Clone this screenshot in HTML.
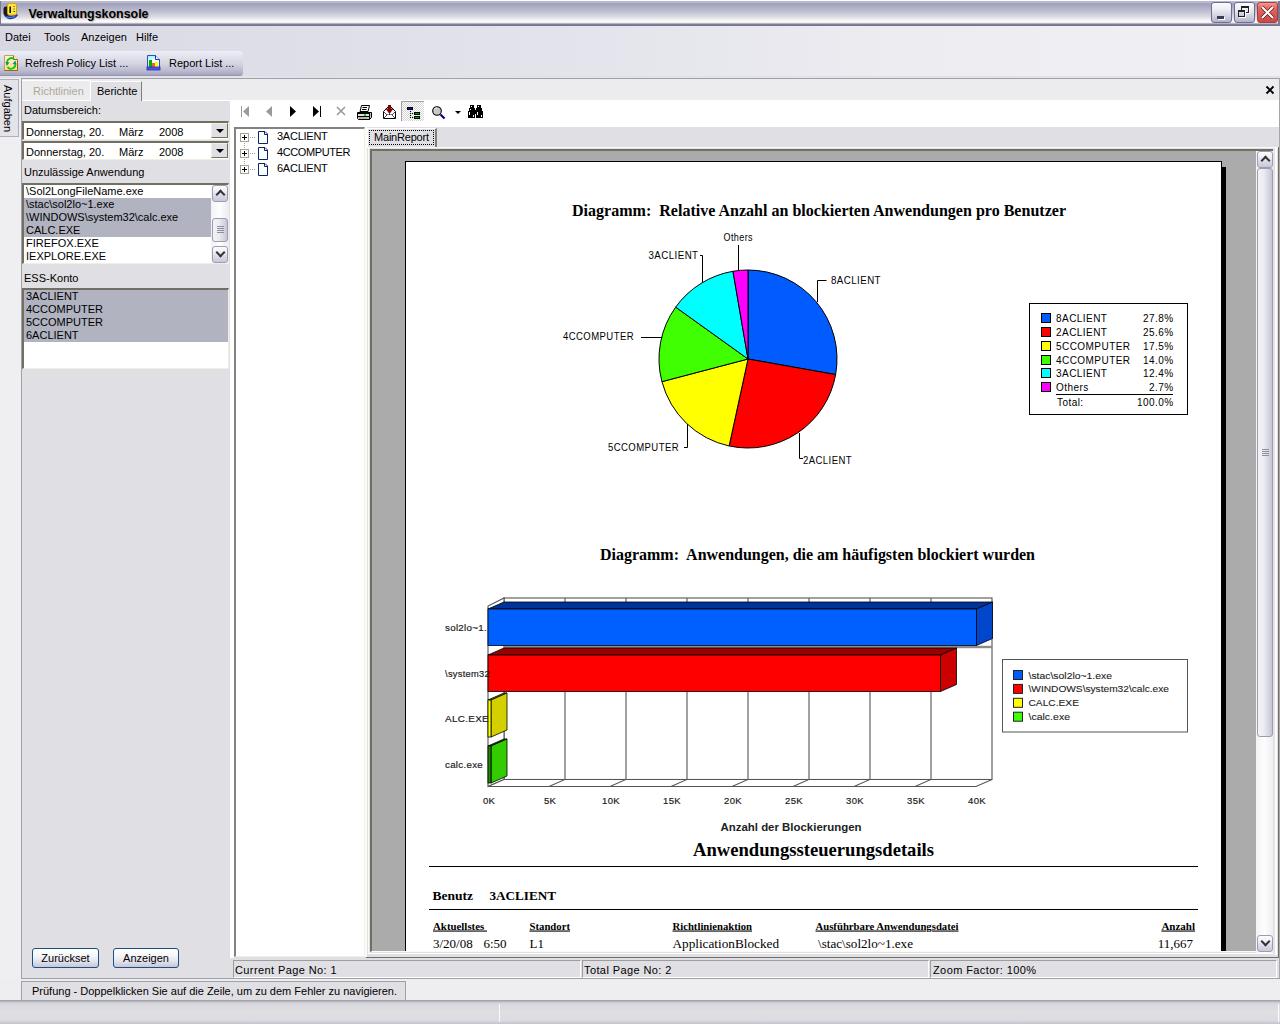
<!DOCTYPE html>
<html><head><meta charset="utf-8">
<style>
*{margin:0;padding:0;box-sizing:border-box}
html,body{width:1280px;height:1024px;overflow:hidden;background:#e0dfe3;font-family:"Liberation Sans",sans-serif;font-size:11px;color:#000}
.a{position:absolute}
.t{position:absolute;white-space:nowrap;line-height:13px}
.serif{font-family:"Liberation Serif",serif}

.dp{left:22px;width:207px;height:19px;background:#fff;border-top:2px solid #716f64;border-left:2px solid #716f64;border-bottom:1px solid #f1efe2;border-right:1px solid #f1efe2}
.sbtrack{background:linear-gradient(90deg,#f3f3f6,#fdfdfd 50%,#eeeef2)}
.sbbtn,.sbthumb{border:1px solid #9c9cb4;border-radius:3px}.sbbtn{background:linear-gradient(#fdfdfe 0,#f0f0f6 30%,#d4d4e2 75%,#c8c8da)}.sbthumb{background:linear-gradient(90deg,#f2f2f6,#ececf2 40%,#d0d0de 85%,#c4c4d4)}
.btn{border:1px solid #1d4f87;border-radius:3px;background:linear-gradient(#fff 0,#f6f6fa 35%,#e2e2ec 70%,#c6c6d6 100%);text-align:center;line-height:18px}
.chev{position:absolute;left:4px;width:7px;height:7px;border-left:2px solid #333;border-top:2px solid #333}
.chev.up{top:5px;transform:rotate(45deg)}
.chev.dn{top:2px;transform:rotate(225deg)}
.grip{position:absolute;left:4px;top:50%;margin-top:-4px;width:7px;height:7px;background:repeating-linear-gradient(#8e8ea0 0 1px,transparent 1px 2px)}

.ddb{width:17px;height:15px;background:#e0dfe3;border-right:1px solid #716f64;border-bottom:1px solid #716f64;border-top:1px solid #f1efe2;border-left:1px solid #f1efe2}
.tri{position:absolute;left:4px;top:5px;width:0;height:0;border-left:4px solid transparent;border-right:4px solid transparent;border-top:4px solid #000}

.sp{top:960px;height:18px;border-top:1px solid #9d9da1;border-left:1px solid #9d9da1;border-bottom:1px solid #fff;border-right:1px solid #fff}

.tbb{width:21px;height:21px;border:1px solid #6e6e92;border-radius:3px;background:linear-gradient(#fcfcfe 0,#ececf4 35%,#c8c8da 80%,#b0b0c8)}
</style></head><body>
<!-- title bar -->
<div class="a" style="left:0;top:0;width:1280px;height:26px;background:linear-gradient(#fdfdfe 0,#fdfdfe 1px,#b8b8cc 1px,#b8b8cc 3px,#a2a2be 3px,#a4a4bf 5px,#b4b6c8 9px,#c6c8d6 13px,#dcdce4 17px,#f2f2f5 20px,#fefefe 22px,#e2ded8 23px,#8a8aa2 24px,#747490 25px,#747490 26px)"></div>
<div class="a" style="left:0;top:1px;width:1px;height:24px;background:#7a7a94"></div>
<div class="a" style="left:1278px;top:1px;width:2px;height:24px;background:#7a7a94"></div>
<svg class="a" style="left:2px;top:2px" width="18" height="19" viewBox="0 0 18 19">
 <path d="M2 13.5 Q5 18 10 17 Q14 16.5 16 13 L15 12 Q9 15 3 11.5Z" fill="#1a3c9c"/>
 <path d="M4 15 Q8 16.5 13 14.5" fill="none" stroke="#7aa0e8" stroke-width="0.8"/>
 <path d="M1.5 6 Q2 4.5 4 4.5 L6 4.5 V14 Q3 14 1.5 12Z" fill="#1a1a1a"/>
 <rect x="5.5" y="1.5" width="9" height="11.5" rx="1.8" fill="#ffe83a" stroke="#d8a000" stroke-width="1"/>
 <path d="M8.2 4.5 V11" stroke="#111" stroke-width="1.6"/>
 <path d="M11.5 4.5 H12.5 M11.5 7 H12.5 M11.5 9.5 H13" stroke="#333" stroke-width="1.2"/>
</svg>
<svg class="a" style="left:0;top:0" width="200" height="26"><text x="28.5" y="18" font-family="Liberation Sans, sans-serif" font-weight="bold" font-size="12.5" textLength="120" lengthAdjust="spacingAndGlyphs" fill="#000" style="text-shadow:1px 1px 1px rgba(0,0,0,.25)">Verwaltungskonsole</text></svg>
<div class="a tbb" style="left:1211px;top:2px"><div class="a" style="left:5px;top:13px;width:7px;height:3px;background:#3a3a5e;box-shadow:1px 1px 0 #fff"></div></div>
<div class="a tbb" style="left:1234px;top:2px">
 <div class="a" style="left:6px;top:3px;width:8px;height:7px;border:1px solid #222;border-top-width:2px;box-shadow:1px 1px 0 #fff"></div>
 <div class="a" style="left:3px;top:7px;width:7px;height:7px;border:1px solid #222;border-top-width:2px;background:linear-gradient(#e0e0ea,#c4c4d6);box-shadow:1px 1px 0 #fff"></div>
</div>
<div class="a tbb" style="left:1257px;top:2px;border-color:#b23a3a;background:linear-gradient(#f0a090 0,#e06a64 25%,#d45a5a 60%,#c84848)">
 <svg class="a" style="left:-1px;top:-1px" width="21" height="21" viewBox="0 0 21 21"><path d="M5 5 L16 16 M16 5 L5 16" stroke="#5a1010" stroke-width="3.2"/><path d="M5 5 L16 16 M16 5 L5 16" stroke="#fff" stroke-width="2"/></svg>
</div>
<!-- menu bar -->
<div class="a" style="left:0;top:26px;width:1280px;height:52px;background:linear-gradient(90deg,#d8d8e2 0,#dcdce6 12%,#e4e4ec 47%,#ececf1 70%,#efeff3 85%,#f0f0f4)"></div>
<div class="t" style="left:5px;top:31px">Datei</div>
<div class="t" style="left:44px;top:31px">Tools</div>
<div class="t" style="left:81px;top:31px">Anzeigen</div>
<div class="t" style="left:136px;top:31px">Hilfe</div>
<!-- toolbar -->
<div class="a" style="left:0;top:51px;width:243px;height:25px;border-radius:0 3px 3px 0;background:linear-gradient(#eeeef8 0,#e4e4ee 20%,#d4d4e2 50%,#bcbcd0 78%,#a6a6c0 95%,#8888a2 100%)"></div>
<div class="a" style="left:0;top:76px;width:1280px;height:2px;background:#e2e2ea"></div>
<div class="a" style="left:0;top:78px;width:1280px;height:1px;background:#a0a0a8"></div>
<svg class="a" style="left:0;top:50px" width="24" height="24" viewBox="0 50 24 24">
 <defs><linearGradient id="rg" x1="0" y1="0" x2="0" y2="1"><stop offset="0" stop-color="#fff8c8"/><stop offset="1" stop-color="#ffe070"/></linearGradient></defs>
 <path d="M4.5 55.5 H13.5 L17.5 59.5 V70.5 H4.5Z" fill="url(#rg)" stroke="#c0a060"/>
 <path d="M17.5 59.5 V70.5 H4.5" fill="none" stroke="#a06018"/>
 <path d="M13.5 55.5 V59.5 H17.5" fill="#fffbe0" stroke="#a06018"/>
 <path d="M7.2 63.5 A4.3 4.3 0 0 1 14.5 59.5" fill="none" stroke="#10c030" stroke-width="1.8"/>
 <path d="M5.5 62 L9.5 62.5 L6.8 66Z" fill="#108890"/>
 <path d="M15 63 A4.3 4.3 0 0 1 7.5 67" fill="none" stroke="#10c030" stroke-width="1.8"/>
 <path d="M16.5 64.5 L12.5 64 L15.5 60.5Z" fill="#108890"/>
</svg>
<div class="t" style="left:25px;top:57px">Refresh Policy List ...</div>
<svg class="a" style="left:142px;top:50px" width="24" height="24" viewBox="142 50 24 24">
 <defs><linearGradient id="bg2" x1="0" y1="0" x2="0" y2="1"><stop offset="0" stop-color="#80ffff"/><stop offset="0.4" stop-color="#ffffff"/><stop offset="1" stop-color="#c0c0ff"/></linearGradient></defs>
 <path d="M147.5 55.5 H155.5 L159.5 59.5 V69.5 H147.5Z" fill="url(#bg2)" stroke="#3050b0"/>
 <path d="M155.5 55.5 V59.5 H159.5" fill="#fff" stroke="#2030b0"/>
 <rect x="149" y="60" width="3" height="7" fill="#00b000"/>
 <rect x="152" y="63" width="3" height="4" fill="#f06030"/>
 <rect x="155" y="62" width="3" height="5" fill="#ffff00"/>
 <rect x="147" y="67" width="13" height="3" fill="#5050f0" stroke="#2030b0" stroke-width="0.8"/>
</svg>
<div class="t" style="left:169px;top:57px">Report List ...</div>
<!-- left vertical tab -->
<div class="a" style="left:0;top:78px;width:21px;height:922px;background:#efeff2"></div>
<div class="a" style="left:0;top:79px;width:19px;height:58px;background:#e4e3e8;border:1px solid #b0b0b8;border-left:none"></div>
<div class="t" style="left:0px;top:84.5px;transform-origin:0 0;transform:rotate(90deg) translate(0,-14px)">Aufgaben</div>
<!-- main panel -->
<div class="a" style="left:21px;top:78px;width:1259px;height:901px;background:#e0dfe3;border-left:1px solid #a0a0a8;border-top:1px solid #a0a0a8;border-bottom:1px solid #a0a0a8"></div>

<!-- tab strip -->
<div class="a" style="left:22px;top:79px;width:1257px;height:21px;background:#ececef"></div><div class="a" style="left:22px;top:100px;width:1257px;height:1px;background:#fff"></div>
<div class="a" style="left:22px;top:80px;width:68px;height:20px;background:#ececef;border-top:1px solid #fff"></div>
<div class="t" style="left:33px;top:85px;color:#aca899">Richtlinien</div>
<div class="a" style="left:90px;top:81px;width:52px;height:20px;background:#e0dfe3;border-top:1px solid #fff;border-left:1px solid #fff;border-right:1px solid #807e74"></div>
<div class="t" style="left:97px;top:85px">Berichte</div>
<svg class="a" style="left:1265px;top:85px" width="11" height="10" viewBox="0 0 11 10"><path d="M1.5 1.5 L8.5 8.5 M8.5 1.5 L1.5 8.5" stroke="#000" stroke-width="1.9"/></svg>
<!-- left panel -->
<div class="a" style="left:22px;top:101px;width:208px;height:877px;background:#e0dfe3"></div>
<div class="t" style="left:24px;top:104px">Datumsbereich:</div>
<div class="a dp" style="top:121px"></div>
<div class="a dp" style="top:141px"></div>

<div class="t" style="left:26px;top:126px">Donnerstag, 20.</div><div class="t" style="left:119px;top:126px">März</div><div class="t" style="left:159px;top:126px">2008</div>
<div class="a ddb" style="left:211px;top:123px"><div class="tri"></div></div>
<div class="t" style="left:26px;top:146px">Donnerstag, 20.</div><div class="t" style="left:119px;top:146px">März</div><div class="t" style="left:159px;top:146px">2008</div>
<div class="a ddb" style="left:211px;top:143px"><div class="tri"></div></div>
<!-- right white area -->
<div class="a" style="left:230px;top:101px;width:1050px;height:26px;background:#fff"></div>
<div class="a" style="left:230px;top:101px;width:4px;height:857px;background:#fff"></div>
<div class="t" style="left:24px;top:166px">Unzulässige Anwendung</div>
<div class="t" style="left:24px;top:272px">ESS-Konto</div>
<div class="a" style="left:22px;top:183px;width:207px;height:81px;background:#fff;border-top:2px solid #716f64;border-left:2px solid #716f64;border-bottom:1px solid #f1efe2;border-right:1px solid #f1efe2"></div>
<div class="a" style="left:24px;top:198px;width:187px;height:39px;background:#b1b3c1"></div>
<div class="t" style="left:26px;top:185px">\Sol2LongFileName.exe</div>
<div class="t" style="left:26px;top:198px">\stac\sol2lo~1.exe</div>
<div class="t" style="left:26px;top:211px">\WINDOWS\system32\calc.exe</div>
<div class="t" style="left:26px;top:224px">CALC.EXE</div>
<div class="t" style="left:26px;top:237px">FIREFOX.EXE</div>
<div class="t" style="left:26px;top:250px">IEXPLORE.EXE</div>
<div class="a sbtrack" style="left:211px;top:185px;width:17px;height:78px"></div>
<div class="a sbbtn" style="left:212px;top:185px;width:16px;height:17px"><div class="chev up"></div></div>
<div class="a sbthumb" style="left:212px;top:218px;width:16px;height:24px"><div class="grip"></div></div>
<div class="a sbbtn" style="left:212px;top:246px;width:16px;height:17px"><div class="chev dn"></div></div>
<div class="a" style="left:22px;top:288px;width:207px;height:81px;background:#fff;border-top:2px solid #716f64;border-left:2px solid #716f64;border-bottom:1px solid #f1efe2;border-right:1px solid #f1efe2"></div>
<div class="a" style="left:24px;top:290px;width:204px;height:52px;background:#b1b3c1"></div>
<div class="t" style="left:26px;top:290px">3ACLIENT</div>
<div class="t" style="left:26px;top:303px">4CCOMPUTER</div>
<div class="t" style="left:26px;top:316px">5CCOMPUTER</div>
<div class="t" style="left:26px;top:329px">6ACLIENT</div>
<div class="a btn" style="left:32px;top:948px;width:67px;height:20px">Zurückset</div>
<div class="a btn" style="left:113px;top:948px;width:66px;height:20px">Anzeigen</div>

<!-- report toolbar icons -->
<svg class="a" style="left:236px;top:100px" width="260" height="26" viewBox="236 100 260 26">
 <g fill="#9a9a9a"><rect x="241" y="106" width="1" height="11"/><path d="M249 106 L243 111.5 L249 117Z"/><path d="M272 106 L266 111.5 L272 117Z"/></g>
 <g fill="#000"><path d="M290 106 L296 111.5 L290 117Z"/><path d="M313 106 L319 111.5 L313 117Z"/><rect x="320" y="106" width="1" height="11"/></g>
 <path d="M337 107 L345 115 M345 107 L337 115" stroke="#9a9a9a" stroke-width="1.6"/>
 <!-- printer -->
 <g transform="translate(354 102)">
  <path d="M7.5 3.5 H15.5 L14 9.5 H6Z" fill="#fff" stroke="#000"/>
  <path d="M8.5 5.5 H13 M8 7.5 H12.5" stroke="#000"/>
  <path d="M3.5 10.5 H17.5 V15.5 L15.5 17.5 H4.5 L3.5 16.5Z" fill="#c8c8c8" stroke="#000"/>
  <path d="M3.5 11.5 H15.5 M3.5 14.5 H15.5 M15.5 10.5 V17.5" stroke="#000"/>
  <rect x="4" y="12" width="11" height="2" fill="#e0e0e0"/>
  <rect x="10" y="12" width="2" height="2" fill="#00e000"/>
  <path d="M5 16 H13" stroke="#a0a0a0"/>
 </g>
 <!-- envelope -->
 <g transform="translate(383 105)">
  <path d="M0.5 6.5 L5 2 H8 L12.5 6.5 V13.5 H0.5Z" fill="#fff" stroke="#000"/>
  <path d="M1 13 L4.5 9.5 H8.5 L12 13" fill="none" stroke="#000" stroke-dasharray="1 0.6"/>
  <path d="M1 7 L4 10 M12 7 L9 10" stroke="#000" stroke-dasharray="1 0.6"/>
  <path d="M5 0 H8 V3.5 H10.5 L6.5 9 L2.5 3.5 H5Z" fill="#800000"/>
 </g>
 <!-- tree toggle pressed -->
 <defs><pattern id="dith" width="2" height="2" patternUnits="userSpaceOnUse"><rect width="2" height="2" fill="#fff"/><rect width="1" height="1" fill="#d4d4d4"/><rect x="1" y="1" width="1" height="1" fill="#d4d4d4"/></pattern></defs>
 <rect x="401" y="101" width="23" height="20" fill="url(#dith)"/>
 <path d="M401.5 121 V101.5 H424" fill="none" stroke="#a0a0a0"/>
 <rect x="407.5" y="107.5" width="5" height="2" fill="#0000ff" stroke="#000"/>
 <rect x="414.5" y="112.5" width="5" height="2" fill="#00a000" stroke="#000"/>
 <rect x="414.5" y="116.5" width="5" height="2" fill="#00a000" stroke="#000"/>
 <g fill="#000"><rect x="410" y="111" width="1" height="1"/><rect x="410" y="113" width="1" height="1"/><rect x="410" y="115" width="1" height="1"/><rect x="410" y="117" width="1" height="1"/><rect x="412" y="113" width="1" height="1"/><rect x="412" y="117" width="1" height="1"/></g>
 <!-- magnifier -->
 <circle cx="437" cy="111" r="4.3" fill="#c8c8c8" stroke="#000" stroke-width="1.1"/>
 <path d="M434.5 109.5 A2.5 2.5 0 0 1 437 108" fill="none" stroke="#fff" stroke-width="1"/>
 <path d="M440.5 114.5 L444.5 118.5" stroke="#000080" stroke-width="2.2"/>
 <path d="M455 111 H461 L458 114Z" fill="#000"/>
 <!-- binoculars -->
 <g fill="#000">
  <rect x="470" y="105" width="4" height="3"/><rect x="469" y="108" width="6" height="3"/><rect x="468" y="111" width="7" height="7"/>
  <rect x="477" y="105" width="4" height="3"/><rect x="476" y="108" width="6" height="3"/><rect x="476" y="111" width="7" height="7"/>
  <rect x="474" y="110" width="3" height="4"/>
 </g>
 <g fill="#fff"><rect x="471" y="106" width="1" height="1"/><rect x="478" y="106" width="1" height="1"/><rect x="469" y="112" width="1" height="3"/><rect x="477" y="112" width="1" height="3"/><rect x="470" y="109" width="1" height="1"/><rect x="473" y="115" width="1" height="2"/><rect x="481" y="115" width="1" height="2"/></g>
</svg>
<!-- tree -->
<div class="a" style="left:234px;top:127px;width:131px;height:830px;background:#fff;border-top:2px solid #828282;border-left:2px solid #828282;border-right:1px solid #f1efe2;border-bottom:1px solid #f1efe2"></div>
<svg class="a" style="left:236px;top:129px" width="40" height="50" viewBox="236 129 40 50">
 <g fill="#fff" stroke="#a5a28d"><rect x="240.5" y="133.5" width="8" height="8"/><rect x="240.5" y="149.5" width="8" height="8"/><rect x="240.5" y="165.5" width="8" height="8"/></g>
 <g stroke="#000"><path d="M242 137.5 H247 M244.5 135 V140 M242 153.5 H247 M244.5 151 V156 M242 169.5 H247 M244.5 167 V172"/></g>
 <g stroke="#a0a0a0" stroke-dasharray="1 1"><path d="M250 137.5 H256 M250 153.5 H256 M250 169.5 H256 M244.5 143 V149 M244.5 159 V165"/></g>
 <g fill="#fff" stroke="#0a246a"><path d="M258.5 131.5 H265 L267.5 134 V143.5 H258.5Z"/><path d="M258.5 147.5 H265 L267.5 150 V159.5 H258.5Z"/><path d="M258.5 163.5 H265 L267.5 166 V175.5 H258.5Z"/></g><path d="M264.5 131.5 V134.5 H267.5 M264.5 147.5 V150.5 H267.5 M264.5 163.5 V166.5 H267.5" fill="none" stroke="#0a246a"/>
</svg>
<div class="t" style="left:277px;top:130px;letter-spacing:-0.25px">3ACLIENT</div>
<div class="t" style="left:277px;top:146px;letter-spacing:-0.4px">4CCOMPUTER</div>
<div class="t" style="left:277px;top:162px;letter-spacing:-0.25px">6ACLIENT</div>
<!-- report tab area -->
<div class="a" style="left:365px;top:127px;width:915px;height:830px;background:#e0dfe3"></div>
<div class="a" style="left:365px;top:127px;width:2px;height:830px;background:#fbfbf8"></div>
<div class="a" style="left:367px;top:128px;width:70px;height:20px;background:#e0dfe3;border-top:1px solid #fff;border-left:1px solid #fff;border-right:2px solid #828278"></div>
<div class="a" style="left:369px;top:130px;width:65px;height:15px;border:1px dotted #000"></div>
<div class="t" style="left:374px;top:131px;letter-spacing:-0.2px">MainReport</div>
<!-- report frame -->
<div class="a" style="left:370px;top:149px;width:906px;height:803px;background:#ababab;border-top:2px solid #716f64;border-left:2px solid #716f64;border-bottom:1px solid #fbfbf0"></div>
<div class="a" style="left:368px;top:147px;width:910px;height:807px;border-top:1px solid #fbfbf8;border-left:1px solid #fbfbf8;border-right:2px solid #fbfbf8;border-bottom:1px solid #fff"></div><div class="a" style="left:366px;top:957px;width:912px;height:1px;background:#716f64"></div>
<div class="a" style="left:1222px;top:167px;width:4px;height:784px;background:#000"></div>
<div class="a" id="page" style="left:405px;top:161px;width:817px;height:790px;background:#fff;border:1px solid #000;border-bottom:none;overflow:hidden"></div>
<!--PAGE--><svg class="a" style="left:405px;top:161px" width="817" height="790" viewBox="405 161 817 790" font-family="Liberation Sans, sans-serif" xml:space="preserve">
<text x="572" y="215.7" font-family="Liberation Serif, serif" font-weight="bold" font-size="16" textLength="494" lengthAdjust="spacingAndGlyphs">Diagramm:&#160; Relative Anzahl an blockierten Anwendungen pro Benutzer</text>
<path d="M748 359 L748.00 270.00 A89 89 0 0 1 835.63 374.58Z" fill="#005cff" stroke="#000" stroke-width="1"/>
<path d="M748 359 L835.63 374.58 A89 89 0 0 1 729.13 445.98Z" fill="#ff0000" stroke="#000" stroke-width="1"/>
<path d="M748 359 L729.13 445.98 A89 89 0 0 1 661.94 381.67Z" fill="#ffff00" stroke="#000" stroke-width="1"/>
<path d="M748 359 L661.94 381.67 A89 89 0 0 1 675.67 307.14Z" fill="#40ff00" stroke="#000" stroke-width="1"/>
<path d="M748 359 L675.67 307.14 A89 89 0 0 1 732.97 271.28Z" fill="#00ffff" stroke="#000" stroke-width="1"/>
<path d="M748 359 L732.97 271.28 A89 89 0 0 1 748.00 270.00Z" fill="#ff00ff" stroke="#000" stroke-width="1"/>
<text x="723.5" y="241" font-size="10" letter-spacing="0.45" textLength="29.5" lengthAdjust="spacingAndGlyphs" >Others</text>
<text x="648.5" y="259" font-size="10" letter-spacing="0.45" textLength="50" lengthAdjust="spacingAndGlyphs" >3ACLIENT</text>
<text x="831" y="284" font-size="10" letter-spacing="0.45" textLength="50" lengthAdjust="spacingAndGlyphs" >8ACLIENT</text>
<text x="563" y="340" font-size="10" letter-spacing="0.45" textLength="71" lengthAdjust="spacingAndGlyphs" >4CCOMPUTER</text>
<text x="608" y="451" font-size="10" letter-spacing="0.45" textLength="71" lengthAdjust="spacingAndGlyphs" >5CCOMPUTER</text>
<text x="803" y="464.2" font-size="10" letter-spacing="0.45" textLength="49" lengthAdjust="spacingAndGlyphs" >2ACLIENT</text>
<path d="M738.5 245 V271 M700 255.5 H702.5 V282 M826.5 280.5 H817.5 V302 M641 337.5 H662 M684 447.5 H687.5 V424 M803 458.5 H799.5 V433" fill="none" stroke="#000" stroke-width="1"/>
<rect x="1029.5" y="303.5" width="158" height="111" fill="#fff" stroke="#000"/>
<rect x="1041.5" y="313.5" width="9" height="9" fill="#005cff" stroke="#000"/>
<text x="1056" y="322" font-size="10" letter-spacing="0.45">8ACLIENT</text>
<text x="1173.5" y="322" font-size="10" letter-spacing="0.45" text-anchor="end">27.8%</text>
<rect x="1041.5" y="327.5" width="9" height="9" fill="#ff0000" stroke="#000"/>
<text x="1056" y="336" font-size="10" letter-spacing="0.45">2ACLIENT</text>
<text x="1173.5" y="336" font-size="10" letter-spacing="0.45" text-anchor="end">25.6%</text>
<rect x="1041.5" y="341.5" width="9" height="9" fill="#ffff00" stroke="#000"/>
<text x="1056" y="350" font-size="10" letter-spacing="0.45">5CCOMPUTER</text>
<text x="1173.5" y="350" font-size="10" letter-spacing="0.45" text-anchor="end">17.5%</text>
<rect x="1041.5" y="355.5" width="9" height="9" fill="#40ff00" stroke="#000"/>
<text x="1056" y="364" font-size="10" letter-spacing="0.45">4CCOMPUTER</text>
<text x="1173.5" y="364" font-size="10" letter-spacing="0.45" text-anchor="end">14.0%</text>
<rect x="1041.5" y="368.5" width="9" height="9" fill="#00ffff" stroke="#000"/>
<text x="1056" y="377" font-size="10" letter-spacing="0.45">3ACLIENT</text>
<text x="1173.5" y="377" font-size="10" letter-spacing="0.45" text-anchor="end">12.4%</text>
<rect x="1041.5" y="382.5" width="9" height="9" fill="#ff00ff" stroke="#000"/>
<text x="1056" y="391" font-size="10" letter-spacing="0.45">Others</text>
<text x="1173.5" y="391" font-size="10" letter-spacing="0.45" text-anchor="end">2.7%</text>
<path d="M1056 394.5 H1173" stroke="#000"/>
<text x="1057" y="406" font-size="10" letter-spacing="0.45">Total:</text>
<text x="1173.5" y="406" font-size="10" letter-spacing="0.45" text-anchor="end">100.0%</text>
<text x="600" y="559.5" font-family="Liberation Serif, serif" font-weight="bold" font-size="16" textLength="435" lengthAdjust="spacingAndGlyphs">Diagramm:&#160; Anwendungen, die am häufigsten blockiert wurden</text>
<rect x="504" y="598" width="488" height="181.5" fill="#fff" stroke="#555" stroke-width="1.1"/>
<path d="M488 786.5 V606 L504 598 V779.5Z" fill="#fff" stroke="#555" stroke-width="1.1"/>
<path d="M488 786.5 H976 L992 779.5 H504Z" fill="#fff" stroke="#555" stroke-width="1.1"/>
<path d="M565 598 V779.5 L549 786.5" fill="none" stroke="#555" stroke-width="1.1"/>
<path d="M626 598 V779.5 L610 786.5" fill="none" stroke="#555" stroke-width="1.1"/>
<path d="M687 598 V779.5 L671 786.5" fill="none" stroke="#555" stroke-width="1.1"/>
<path d="M748 598 V779.5 L732 786.5" fill="none" stroke="#555" stroke-width="1.1"/>
<path d="M809 598 V779.5 L793 786.5" fill="none" stroke="#555" stroke-width="1.1"/>
<path d="M870 598 V779.5 L854 786.5" fill="none" stroke="#555" stroke-width="1.1"/>
<path d="M931 598 V779.5 L915 786.5" fill="none" stroke="#555" stroke-width="1.1"/>
<rect x="504" y="645.8" width="488" height="2.4" fill="#8c8c8c"/>
<path d="M488 609 L504 602 H992.5 L976.5 609Z" fill="#003399" stroke="#000" stroke-width="0.8"/>
<path d="M976.5 609 L992.5 602 V638.5 L976.5 645.5Z" fill="#0047cc" stroke="#000" stroke-width="0.8"/>
<rect x="488" y="609" width="488.5" height="36.5" fill="#0060ff" stroke="#000" stroke-width="0.8"/>
<path d="M488 655 L504 648 H956.5 L940.5 655Z" fill="#990000" stroke="#000" stroke-width="0.8"/>
<path d="M940.5 655 L956.5 648 V684.5 L940.5 691.5Z" fill="#cc0000" stroke="#000" stroke-width="0.8"/>
<rect x="488" y="655" width="452.5" height="36.5" fill="#ff0000" stroke="#000" stroke-width="0.8"/>
<path d="M488 700 L504 693 H507 L491 700Z" fill="#888800" stroke="#000" stroke-width="0.8"/>
<path d="M491 700 L507 693 V730 L491 737Z" fill="#d4d000" stroke="#000" stroke-width="0.8"/>
<rect x="488" y="700" width="3" height="37" fill="#ffff00" stroke="#000" stroke-width="0.8"/>
<path d="M488 746 L504 739 H507 L491 746Z" fill="#145a00" stroke="#000" stroke-width="0.8"/>
<path d="M491 746 L507 739 V776 L491 783Z" fill="#33cc00" stroke="#000" stroke-width="0.8"/>
<rect x="488" y="746" width="3" height="37" fill="#208a00" stroke="#000" stroke-width="0.8"/>
<text x="445" y="630.5" font-size="9.5" fill="#1a1a1a" stroke="#1a1a1a" stroke-width="0.18" letter-spacing="0.3" textLength="42" lengthAdjust="spacingAndGlyphs">sol2lo~1.</text>
<text x="445" y="676.5" font-size="9.5" fill="#1a1a1a" stroke="#1a1a1a" stroke-width="0.18" letter-spacing="0.3" textLength="45" lengthAdjust="spacingAndGlyphs">\system32</text>
<text x="445" y="721.5" font-size="9.5" fill="#1a1a1a" stroke="#1a1a1a" stroke-width="0.18" letter-spacing="0.3" textLength="44" lengthAdjust="spacingAndGlyphs">ALC.EXE</text>
<text x="445" y="767.5" font-size="9.5" fill="#1a1a1a" stroke="#1a1a1a" stroke-width="0.18" letter-spacing="0.3" textLength="38" lengthAdjust="spacingAndGlyphs">calc.exe</text>
<rect x="440" y="600" width="5" height="180" fill="#fff"/>
<text x="489" y="803.8" font-size="9.5" fill="#1a1a1a" stroke="#1a1a1a" stroke-width="0.18" letter-spacing="0.3" text-anchor="middle">0K</text>
<text x="550" y="803.8" font-size="9.5" fill="#1a1a1a" stroke="#1a1a1a" stroke-width="0.18" letter-spacing="0.3" text-anchor="middle">5K</text>
<text x="611" y="803.8" font-size="9.5" fill="#1a1a1a" stroke="#1a1a1a" stroke-width="0.18" letter-spacing="0.3" text-anchor="middle">10K</text>
<text x="672" y="803.8" font-size="9.5" fill="#1a1a1a" stroke="#1a1a1a" stroke-width="0.18" letter-spacing="0.3" text-anchor="middle">15K</text>
<text x="733" y="803.8" font-size="9.5" fill="#1a1a1a" stroke="#1a1a1a" stroke-width="0.18" letter-spacing="0.3" text-anchor="middle">20K</text>
<text x="794" y="803.8" font-size="9.5" fill="#1a1a1a" stroke="#1a1a1a" stroke-width="0.18" letter-spacing="0.3" text-anchor="middle">25K</text>
<text x="855" y="803.8" font-size="9.5" fill="#1a1a1a" stroke="#1a1a1a" stroke-width="0.18" letter-spacing="0.3" text-anchor="middle">30K</text>
<text x="916" y="803.8" font-size="9.5" fill="#1a1a1a" stroke="#1a1a1a" stroke-width="0.18" letter-spacing="0.3" text-anchor="middle">35K</text>
<text x="977" y="803.8" font-size="9.5" fill="#1a1a1a" stroke="#1a1a1a" stroke-width="0.18" letter-spacing="0.3" text-anchor="middle">40K</text>
<text x="791" y="830.8" font-size="10.5" font-weight="bold" fill="#222" text-anchor="middle" textLength="141" lengthAdjust="spacingAndGlyphs">Anzahl der Blockierungen</text>
<rect x="1002.5" y="659.5" width="185" height="72.5" fill="#fff" stroke="#555"/>
<rect x="1013.5" y="670.5" width="9" height="9" fill="#005cff" stroke="#222"/>
<text x="1028.5" y="678.5" font-size="9.5" fill="#222" stroke="#222" stroke-width="0.1" textLength="83.5" lengthAdjust="spacingAndGlyphs">\stac\sol2lo~1.exe</text>
<rect x="1013.5" y="684.4" width="9" height="9" fill="#ff0000" stroke="#222"/>
<text x="1028.5" y="692.4" font-size="9.5" fill="#222" stroke="#222" stroke-width="0.1" textLength="140.5" lengthAdjust="spacingAndGlyphs">\WINDOWS\system32\calc.exe</text>
<rect x="1013.5" y="698.3" width="9" height="9" fill="#ffff00" stroke="#222"/>
<text x="1028.5" y="706.3" font-size="9.5" fill="#222" stroke="#222" stroke-width="0.1" textLength="50.5" lengthAdjust="spacingAndGlyphs">CALC.EXE</text>
<rect x="1013.5" y="712.2" width="9" height="9" fill="#40ff00" stroke="#222"/>
<text x="1028.5" y="720.2" font-size="9.5" fill="#222" stroke="#222" stroke-width="0.1" textLength="41.5" lengthAdjust="spacingAndGlyphs">\calc.exe</text>
<text x="693" y="856" font-family="Liberation Serif, serif" font-weight="bold" font-size="19" textLength="241" lengthAdjust="spacingAndGlyphs">Anwendungssteuerungsdetails</text>
<path d="M429 866.5 H1198 M429 909.5 H1198" stroke="#000" stroke-width="1"/>
<text x="432.5" y="900.3" font-family="Liberation Serif, serif" font-weight="bold" font-size="13.5">Benutz</text>
<text x="489.5" y="900.3" font-family="Liberation Serif, serif" font-weight="bold" font-size="13.5" textLength="66.5" lengthAdjust="spacingAndGlyphs">3ACLIENT</text>
<text x="433" y="929.5" font-family="Liberation Serif, serif" font-weight="bold" font-size="11" text-decoration="underline" textLength="54" lengthAdjust="spacingAndGlyphs">Aktuellstes&#160;</text>
<text x="529.5" y="929.5" font-family="Liberation Serif, serif" font-weight="bold" font-size="11" text-decoration="underline" textLength="40.5" lengthAdjust="spacingAndGlyphs">Standort</text>
<text x="672.5" y="929.5" font-family="Liberation Serif, serif" font-weight="bold" font-size="11" text-decoration="underline" textLength="79.5" lengthAdjust="spacingAndGlyphs">Richtlinienaktion</text>
<text x="815.5" y="929.5" font-family="Liberation Serif, serif" font-weight="bold" font-size="11" text-decoration="underline" textLength="143" lengthAdjust="spacingAndGlyphs">Ausführbare Anwendungsdatei</text>
<text x="1195" y="929.5" font-family="Liberation Serif, serif" font-weight="bold" font-size="11" text-decoration="underline" text-anchor="end">Anzahl</text>
<text x="433" y="948" font-family="Liberation Serif, serif" font-size="13">3/20/08</text>
<text x="483.5" y="948" font-family="Liberation Serif, serif" font-size="13">6:50</text>
<text x="529.5" y="948" font-family="Liberation Serif, serif" font-size="13">L1</text>
<text x="672.5" y="948" font-family="Liberation Serif, serif" font-size="13" textLength="106.5" lengthAdjust="spacingAndGlyphs">ApplicationBlocked</text>
<text x="818" y="948" font-family="Liberation Serif, serif" font-size="13" textLength="95" lengthAdjust="spacingAndGlyphs">\stac\sol2lo~1.exe</text>
<text x="1193" y="948" font-family="Liberation Serif, serif" font-size="13" text-anchor="end">11,667</text>
</svg><!--/PAGE-->
<!-- v scrollbar -->
<div class="a sbtrack" style="left:1256px;top:151px;width:17px;height:802px"></div>
<div class="a sbbtn" style="left:1257px;top:151px;width:16px;height:17px"><div class="chev up"></div></div>
<div class="a sbthumb" style="left:1257px;top:168px;width:16px;height:569px"><div class="grip"></div></div>
<div class="a sbbtn" style="left:1257px;top:935px;width:16px;height:17px"><div class="chev dn"></div></div>
<div class="a" style="left:1273px;top:148px;width:2px;height:807px;background:#e4e3e8"></div><div class="a" style="left:1275px;top:148px;width:2px;height:807px;background:#fbfbf8"></div><div class="a" style="left:1277px;top:148px;width:1px;height:807px;background:#e0dfe3"></div><div class="a" style="left:1278px;top:147px;width:1px;height:811px;background:#716f64"></div><div class="a" style="left:1279px;top:78px;width:1px;height:900px;background:#a5a5ad"></div>
<!-- status panels -->
<div class="a" style="left:233px;top:958px;width:1045px;height:20px;background:#e0dfe3"></div>
<div class="a sp" style="left:233px;width:348px"></div>
<div class="a sp" style="left:582px;width:347px"></div>
<div class="a sp" style="left:930px;width:347px"></div>
<div class="t" style="left:235px;top:964px;letter-spacing:0.4px">Current Page No: 1</div>
<div class="t" style="left:584px;top:964px;letter-spacing:0.4px">Total Page No: 2</div>
<div class="t" style="left:933px;top:964px;letter-spacing:0.4px">Zoom Factor: 100%</div>
<!-- status bars -->
<div class="a" style="left:0;top:979px;width:1280px;height:21px;background:#eeeef1"></div>
<div class="a" style="left:21px;top:981px;width:385px;height:19px;background:#e0dfe3;border-left:1px solid #a0a0a8;border-top:1px solid #a0a0a8;border-right:1px solid #a0a0a8"></div>
<div class="t" style="left:32px;top:985px">Prüfung - Doppelklicken Sie auf die Zeile, um zu dem Fehler zu navigieren.</div>
<div class="a" style="left:0;top:1000px;width:1280px;height:24px;background:linear-gradient(#a4a4ac 0,#a4a4ac 1px,#c8c8d0 2px,#d8d8de 4px,#dedee3 12px,#dcdce2 20px,#c4c4cc 24px)"></div>
<div class="a" style="left:499px;top:1004px;width:1px;height:18px;background:#fbfbf4"></div>
<div class="a" style="left:1278px;top:1004px;width:1px;height:18px;background:#fbfbf4"></div>
</body></html>
